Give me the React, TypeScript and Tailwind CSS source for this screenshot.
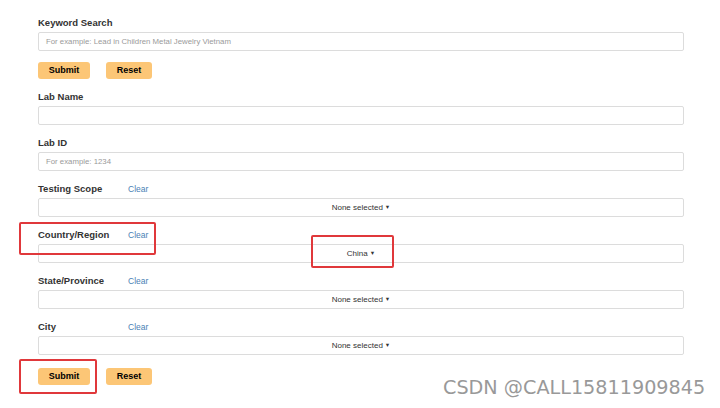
import React from "react";

const font = { fontFamily: '"Liberation Sans", Arial, sans-serif' };

function Label({ text, clear }: { text: string; clear?: boolean }) {
  return (
    <div className="flex items-center h-[12px] mb-[3px]">
      <span className="w-[90px] text-[9.5px] font-bold text-[#333] leading-[12px]">{text}</span>
      {clear && <span className="text-[8.5px] text-[#4a7fb5] leading-[12px]">Clear</span>}
    </div>
  );
}

function TextInput({ placeholder }: { placeholder?: string }) {
  return (
    <div className="h-[19px] w-[646px] border border-[#dcdcdc] rounded-[2px] flex items-center px-[7px] text-[7.8px] text-[#9a9a9a]">
      {placeholder}
    </div>
  );
}

function Select({ value }: { value: string }) {
  return (
    <div className="h-[19px] w-[646px] border border-[#dcdcdc] rounded-[2px] flex items-center justify-center text-[8px] text-[#333]">
      <span>{value}</span>
      <span className="ml-[2px] text-[5.5px] leading-none">▼</span>
    </div>
  );
}

function Buttons() {
  return (
    <div className="flex gap-[16px]">
      <div className="w-[52px] h-[17px] rounded-[3px] bg-[#fcc676] flex items-center justify-center text-[9px] font-bold text-black">
        Submit
      </div>
      <div className="w-[46px] h-[17px] rounded-[3px] bg-[#fcc676] flex items-center justify-center text-[9px] font-bold text-black">
        Reset
      </div>
    </div>
  );
}

export default function App() {
  return (
    <div className="relative w-[720px] h-[408px] bg-white overflow-hidden" style={font}>
      <div className="pl-[38px] pt-[17px] flex flex-col">
        <Label text="Keyword Search" />
        <TextInput placeholder="For example: Lead in Children Metal Jewelry Vietnam" />
        <div className="mt-[11px]">
          <Buttons />
        </div>
        <div className="mt-[12px]">
          <Label text="Lab Name" />
          <TextInput />
        </div>
        <div className="mt-[12px]">
          <Label text="Lab ID" />
          <TextInput placeholder="For example: 1234" />
        </div>
        <div className="mt-[12px]">
          <Label text="Testing Scope" clear />
          <Select value="None selected" />
        </div>
        <div className="mt-[12px]">
          <Label text="Country/Region" clear />
          <Select value="China" />
        </div>
        <div className="mt-[12px]">
          <Label text="State/Province" clear />
          <Select value="None selected" />
        </div>
        <div className="mt-[12px]">
          <Label text="City" clear />
          <Select value="None selected" />
        </div>
        <div className="mt-[13px]">
          <Buttons />
        </div>
      </div>

      {/* annotation boxes */}
      <div className="absolute left-[19px] top-[222px] w-[137px] h-[33px] border-2 border-[#e0383b] rounded-[2px]" />
      <div className="absolute left-[311px] top-[235px] w-[83px] h-[33px] border-2 border-[#e0383b] rounded-[2px]" />
      <div className="absolute left-[19px] top-[359px] w-[78px] h-[35px] border-2 border-[#e0383b] rounded-[2px]" />

      {/* watermark */}
      <div className="absolute left-[443px] top-[376px] text-[19.2px] leading-[24px] text-[#999] whitespace-nowrap" style={{ fontFamily: '"DejaVu Sans", "Liberation Sans", sans-serif' }}>
        CSDN @CALL15811909845
      </div>
    </div>
  );
}
